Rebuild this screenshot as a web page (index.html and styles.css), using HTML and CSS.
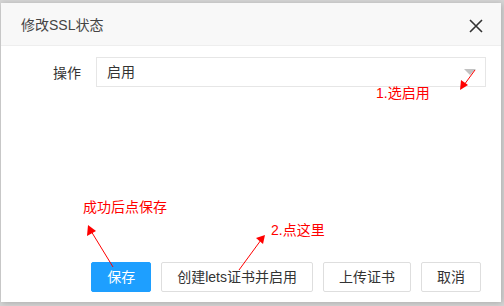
FILE: index.html
```html
<!DOCTYPE html>
<html lang="zh-CN">
<head>
    <meta charset="UTF-8">
    <title>修改SSL状态</title>
    <link rel="stylesheet" href="styles.css">
</head>
<body>
    <div class="layer">
        <div class="layer-title">
            <span>修改SSL状态</span>
            <svg class="layer-close" width="14" height="14" viewBox="0 0 14 14">
                <path d="M1 1 L13 13 M13 1 L1 13" stroke="#333" stroke-width="1.6" fill="none"/>
            </svg>
        </div>
        <div class="layer-content">
            <div class="form-item">
                <label class="form-label">操作</label>
                <div class="form-select">
                    <span>启用</span>
                    <i class="edge"></i>
                </div>
            </div>
        </div>
        <div class="layer-btn">
            <a class="btn btn-primary">保存</a>
            <a class="btn">创建lets证书并启用</a>
            <a class="btn">上传证书</a>
            <a class="btn">取消</a>
        </div>
    </div>

    <!-- 标注 -->
    <span class="note note-1">1.选启用</span>
    <span class="note note-2">成功后点保存</span>
    <span class="note note-3">2.点这里</span>
    <svg class="arrows" width="504" height="306" viewBox="0 0 504 306">
        <g stroke="#f00" stroke-width="1" fill="#f00">
            <line x1="475" y1="70" x2="464" y2="85"/>
            <polygon points="460,90 461,80 468,85" stroke="none"/>
            <line x1="113" y1="267" x2="91" y2="231"/>
            <polygon points="88,225 87,236 96,231" stroke="none"/>
            <line x1="239" y1="270" x2="261" y2="240"/>
            <polygon points="265,235 256,238 263,244" stroke="none"/>
        </g>
    </svg>
</body>
</html>
```

FILE: styles.css
```css
body {
    margin: 0;
    width: 504px;
    height: 306px;
    overflow: hidden;
    background-color: #d5d5d5;
    font-family: "Liberation Sans", "Noto Sans CJK SC", sans-serif;
    font-size: 14px;
    position: relative;
}
.layer {
    margin: 3px 0 0 1px;
    width: 500px;
    height: 299px;
    background-color: #fff;
    box-shadow: 1px 1px 6px rgba(0, 0, 0, 0.2);
    display: flex;
    flex-direction: column;
}
.layer-title {
    height: 42px;
    line-height: 42px;
    padding: 1px 18px 0 20px;
    box-sizing: border-box;
    height: 43px;
    background-color: #f8f8f8;
    border-bottom: 1px solid #eee;
    color: #444;
    display: flex;
    align-items: center;
    justify-content: space-between;
}
.layer-close {
    display: block;
    margin-top: 2px;
}
.layer-content {
    flex: 1;
    padding: 11px 15px 0 0;
}
.form-item {
    display: flex;
    align-items: center;
}
.form-label {
    width: 95px;
    padding-right: 15px;
    box-sizing: border-box;
    text-align: right;
    color: #333;
}
.form-select {
    flex: 1;
    height: 30px;
    line-height: 28px;
    box-sizing: border-box;
    border: 1px solid #e6e6e6;
    padding-left: 10px;
    color: #333;
    position: relative;
}
.edge {
    position: absolute;
    right: 9px;
    top: 11px;
    width: 0;
    height: 0;
    border-style: solid;
    border-width: 6px 6px 0 6px;
    border-color: #c2c2c2 transparent transparent transparent;
}
.layer-btn {
    display: flex;
    justify-content: flex-end;
    gap: 10px;
    padding: 0 20px 10px 0;
}
.btn {
    height: 30px;
    line-height: 28px;
    box-sizing: border-box;
    padding: 0 15px;
    border: 1px solid #dedede;
    border-radius: 2px;
    background-color: #fff;
    color: #333;
    cursor: pointer;
}
.btn-primary {
    border-color: #1e9fff;
    background-color: #1e9fff;
    color: #fff;
}
.note {
    position: absolute;
    color: #f00;
    font-size: 14px;
    line-height: 16px;
    white-space: nowrap;
}
.note-1 {
    left: 376px;
    top: 85px;
}
.note-2 {
    left: 83px;
    top: 199px;
}
.note-3 {
    left: 271px;
    top: 222px;
}
.arrows {
    position: absolute;
    left: 0;
    top: 0;
}
```
